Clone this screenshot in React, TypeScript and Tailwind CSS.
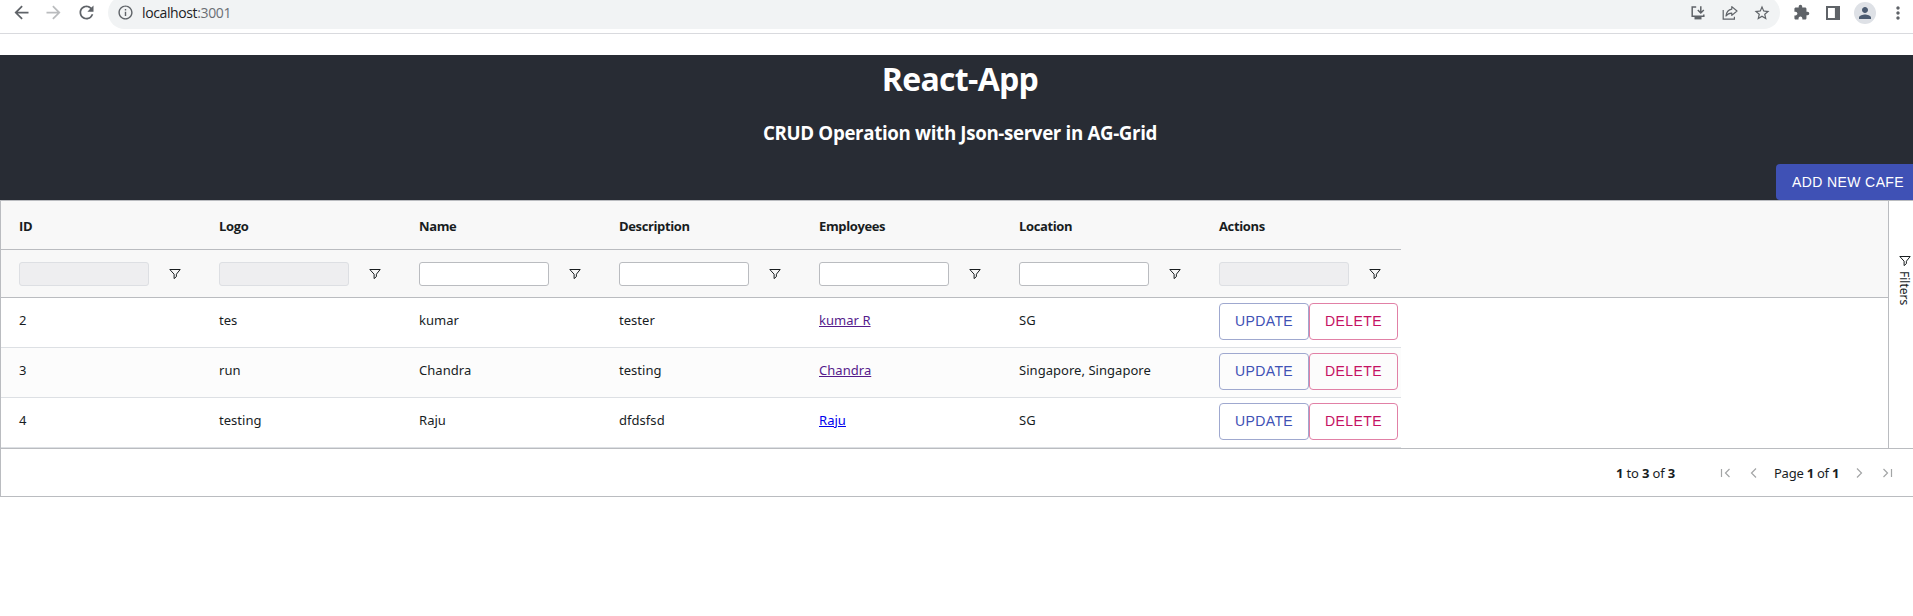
import type { ReactNode } from "react";
import { MdArrowBack, MdArrowForward, MdRefresh, MdInfoOutline, MdStarBorder, MdExtension, MdPerson, MdMoreVert } from "react-icons/md";

const columns = [
  { title: "ID", disabled: true },
  { title: "Logo", disabled: true },
  { title: "Name", disabled: false },
  { title: "Description", disabled: false },
  { title: "Employees", disabled: false },
  { title: "Location", disabled: false },
  { title: "Actions", disabled: true },
];

const rows = [
  { id: "2", logo: "tes", name: "kumar", description: "tester", employee: "kumar R", visited: true, location: "SG" },
  { id: "3", logo: "run", name: "Chandra", description: "testing", employee: "Chandra", visited: true, location: "Singapore, Singapore" },
  { id: "4", logo: "testing", name: "Raju", description: "dfdsfsd", employee: "Raju", visited: false, location: "SG" },
];

function FilterIcon({ className = "" }: { className?: string }) {
  return (
    <svg width="12" height="12" viewBox="0 0 12 12" fill="none" stroke="currentColor" strokeWidth="1" className={className}>
      <path d="M0.8 1.5H11.2L7.4 6.2V8.6L5.1 10.6V6.2Z" />
    </svg>
  );
}

function BrowserBar() {
  return (
    <div className="flex h-[34px] w-[1913px] items-start overflow-hidden border-b border-[#d9dade] bg-white text-[#5f6368]">
      <div className="flex h-[25px] items-center">
        <MdArrowBack size={21} className="ml-[11px]" />
        <MdArrowForward size={21} className="ml-[11px] text-[#babcbe]" />
        <MdRefresh size={21} className="ml-[12px]" />
      </div>
      <div className="-mt-[4px] ml-[11px] flex h-[33px] w-[1672px] items-center rounded-full bg-[#f1f3f4] pr-[9px] pl-[9px]">
        <MdInfoOutline size={17} />
        <span className="ml-[8px] text-[14px] tracking-[-0.38px] text-[#202124]">
          localhost<span className="text-[#6b6f74]">:3001</span>
        </span>
        <svg className="ml-auto" width="16" height="16" viewBox="0 0 16 16" fill="none" stroke="currentColor" strokeWidth="1.5">
          <path d="M6.2 2H2.2V11.2H13.8V9.6M10.8 1.2V7.4M7.8 5L10.8 8L13.8 5" />
          <path d="M4.5 13.2H11.5" strokeWidth="2.4" />
        </svg>
        <svg className="ml-4" width="16" height="16" viewBox="0 0 16 16" fill="none" stroke="currentColor" strokeWidth="1.2">
          <path d="M1.2 5V14.2H12.4V11.8" />
          <path d="M9.8 1.6L15 6L9.8 10.4V8.2C7.2 8.2 5.4 9 4 11C4.4 7.2 6.2 4.6 9.8 4.1Z" strokeLinejoin="round" />
        </svg>
        <MdStarBorder size={18} className="ml-[15px]" />
      </div>
      <div className="flex h-[25px] items-center">
        <MdExtension size={17} className="ml-[13px]" />
        <svg className="ml-[16px]" width="14" height="14" viewBox="0 0 14 14" fill="none" stroke="currentColor">
          <path d="M1 1H13V13H1Z" strokeWidth="2" />
          <path d="M11.4 0V14" strokeWidth="5" />
        </svg>
        <span className="ml-[14px] flex size-[22px] items-center justify-center rounded-full bg-[#dee1e6] text-[#4a5a70]">
          <MdPerson size={18} />
        </span>
        <MdMoreVert size={20} className="ml-[12px]" />
      </div>
    </div>
  );
}

function PageHeader() {
  return (
    <header className="mt-[21px] flex h-[145px] flex-col items-center bg-[#282c34] text-white">
      <h1 className="mt-[2px] text-[32px] leading-[44px] font-bold tracking-[-0.7px]">React-App</h1>
      <h3 className="mt-[19px] text-[18.72px] leading-[26px] font-bold tracking-[-0.34px]">
        CRUD Operation with Json-server in AG-Grid
      </h3>
      <button className="mt-auto h-9 w-36 self-end rounded bg-[#3f51b5] font-['Liberation_Sans',sans-serif] text-[14px] tracking-[0.4px] whitespace-nowrap">
        ADD NEW CAFE
      </button>
    </header>
  );
}

function ActionButtons() {
  return (
    <div className="flex pt-[5px] font-['Liberation_Sans',sans-serif] text-[14px] leading-[35px] tracking-[0.4px]">
      <button className="h-[37px] w-[90px] rounded border border-[#9fa8cf] text-[#3f51b5]">UPDATE</button>
      <button className="h-[37px] w-[89px] rounded border border-[#e180a6] text-[#c51162]">DELETE</button>
    </div>
  );
}

function Cell({ children }: { children: ReactNode }) {
  return <div className="h-[49px] w-[200px] pl-[18px] leading-[45px] whitespace-nowrap">{children}</div>;
}

function Grid() {
  return (
    <section className="h-[297px] border border-[#babcc0] font-['Noto_Sans','Open_Sans',sans-serif] text-[13px] text-[#181d1f]">
      <div className="flex h-[247px]">
        <div className="flex-1">
          <div className="h-[97px] border-b border-[#babcc0] bg-[#f8f8f8]">
            <div className="flex h-[49px] w-[1400px] items-center border-b border-[#babcc0] pt-[3px] font-['Open_Sans',sans-serif] font-bold tracking-[-0.37px]">
              {columns.map((c) => (
                <div key={c.title} className="w-[200px] pl-[18px]">{c.title}</div>
              ))}
            </div>
            <div className="flex h-[47px] w-[1400px] items-center">
              {columns.map((c) => (
                <div key={c.title} className="flex w-[200px] items-center pl-[18px]">
                  <input
                    disabled={c.disabled}
                    className="h-6 w-[130px] rounded-[3px] border border-[#babcc0] bg-white disabled:border-[#dddfe3] disabled:bg-[#eeeef0]"
                  />
                  <FilterIcon className="ml-[20px]" />
                </div>
              ))}
            </div>
          </div>
          {rows.map((r) => (
            <div key={r.id} className="flex h-[50px] w-[1400px] border-b border-[#dde0e4] tracking-[0.04px] even:bg-white odd:bg-[#fcfcfc]">
              <Cell>{r.id}</Cell>
              <Cell>{r.logo}</Cell>
              <Cell>{r.name}</Cell>
              <Cell>{r.description}</Cell>
              <Cell>
                <a className={r.visited ? "text-[#551a8b] underline" : "text-[#0000ee] underline"}>{r.employee}</a>
              </Cell>
              <Cell>{r.location}</Cell>
              <Cell><ActionButtons /></Cell>
            </div>
          ))}
        </div>
        <aside className="w-[31px] border-l border-[#babcc0] pt-[54px] pl-[10px]">
          <FilterIcon />
          <div className="mt-[4px] ml-[-3px] text-[12px] leading-[17px] [writing-mode:vertical-rl]">Filters</div>
        </aside>
      </div>
      <Pagination />
    </section>
  );
}

function PageArrow({ d, className }: { d: string; className: string }) {
  return (
    <svg width="12" height="12" viewBox="0 0 12 12" fill="none" stroke="#a3a5a6" strokeWidth="1.2" className={className}>
      <path d={d} />
    </svg>
  );
}

function Pagination() {
  return (
    <div className="flex h-[48px] items-center border-t border-[#babcc0] pl-[1615px] tracking-[-0.15px] whitespace-nowrap">
      <span className="w-[60px] pt-[2px]"><b>1</b> to <b>3</b> of <b>3</b></span>
      <PageArrow className="ml-[44px]" d="M1.5 2V10M9.5 2L5.5 6L9.5 10" />
      <PageArrow className="ml-[16px]" d="M8 1.5L3.5 6L8 10.5" />
      <span className="ml-[14px] w-[65px] pt-[2px] tracking-[-0.25px]">Page <b>1</b> of <b>1</b></span>
      <PageArrow className="ml-[14px]" d="M4 1.5L8.5 6L4 10.5" />
      <PageArrow className="ml-[16px]" d="M2.5 2L6.5 6L2.5 10M10.5 2V10" />
    </div>
  );
}

export default function App() {
  return (
    <div className="h-[616px] w-full overflow-hidden bg-white font-['Open_Sans','Noto_Sans',sans-serif]">
      <BrowserBar />
      <main className="w-[1920px]">
        <PageHeader />
        <Grid />
      </main>
    </div>
  );
}
